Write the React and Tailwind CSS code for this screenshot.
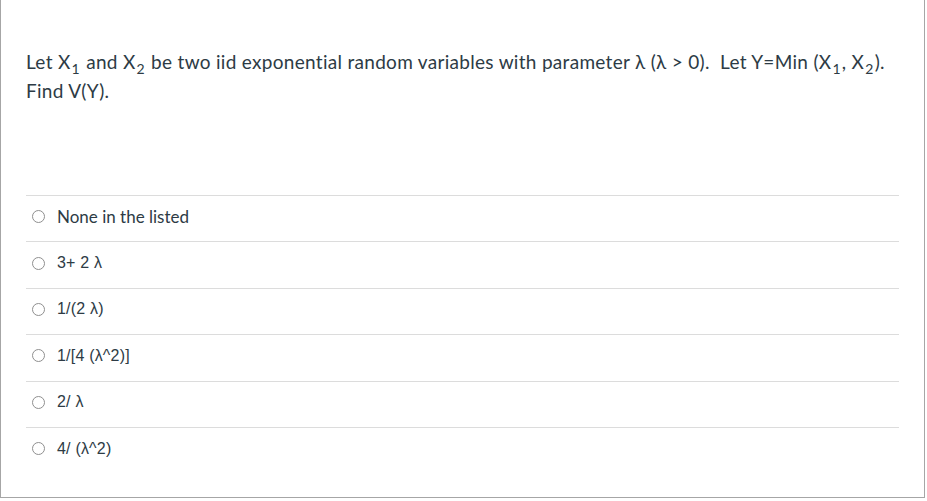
import React from 'react'

const options = [
    { label: 'None in the listed', lato: true },
    { label: '3+ 2 λ' },
    { label: '1/(2 λ)' },
    { label: '1/[4 (λ^2)]' },
    { label: '2/ λ' },
    { label: '4/ (λ^2)' },
]

const Sub = ({ children }) => (
    <sub className="text-[14px] bottom-[-5px] px-[1px]">{children}</sub>
)

const App = () => {
    return (
        <div className="w-[927px] h-[501px] bg-white">
            <div className="w-[925px] h-[498px] border-l border-r border-b border-[#a6a6a6] text-[#2d3b45]">
                <div
                    className="pl-[25px] pr-[20px] pt-[47px] text-[19px] leading-[29px] tracking-[0.3px]"
                    style={{ fontFamily: 'Lato, "Liberation Sans", sans-serif' }}
                >
                    Let X<Sub>1</Sub> and X<Sub>2</Sub> be two iid exponential random variables with parameter λ (λ &gt; 0).&nbsp; Let Y=Min (X<Sub>1</Sub>, X<Sub>2</Sub>).
                    <br />
                    Find V(Y).
                </div>
                <div className="mx-[25px] mt-[90px]">
                    {options.map((opt, i) => (
                        <div key={i} className="h-[46.4px] border-t border-[#dcdcdc] flex items-center pl-[6px] pb-[4px]">
                            <span className="w-[13px] h-[13px] rounded-full border border-[#8f8f8f] bg-white shrink-0" />
                            <span
                                className={opt.lato ? 'ml-[12px] text-[17px]' : 'ml-[12px] text-[16px] tracking-[0.2px]'}
                                style={{ fontFamily: opt.lato ? 'Lato, sans-serif' : '"Liberation Sans", Arial, sans-serif' }}
                            >
                                {opt.label}
                            </span>
                        </div>
                    ))}
                </div>
            </div>
        </div>
    )
}

export default App
